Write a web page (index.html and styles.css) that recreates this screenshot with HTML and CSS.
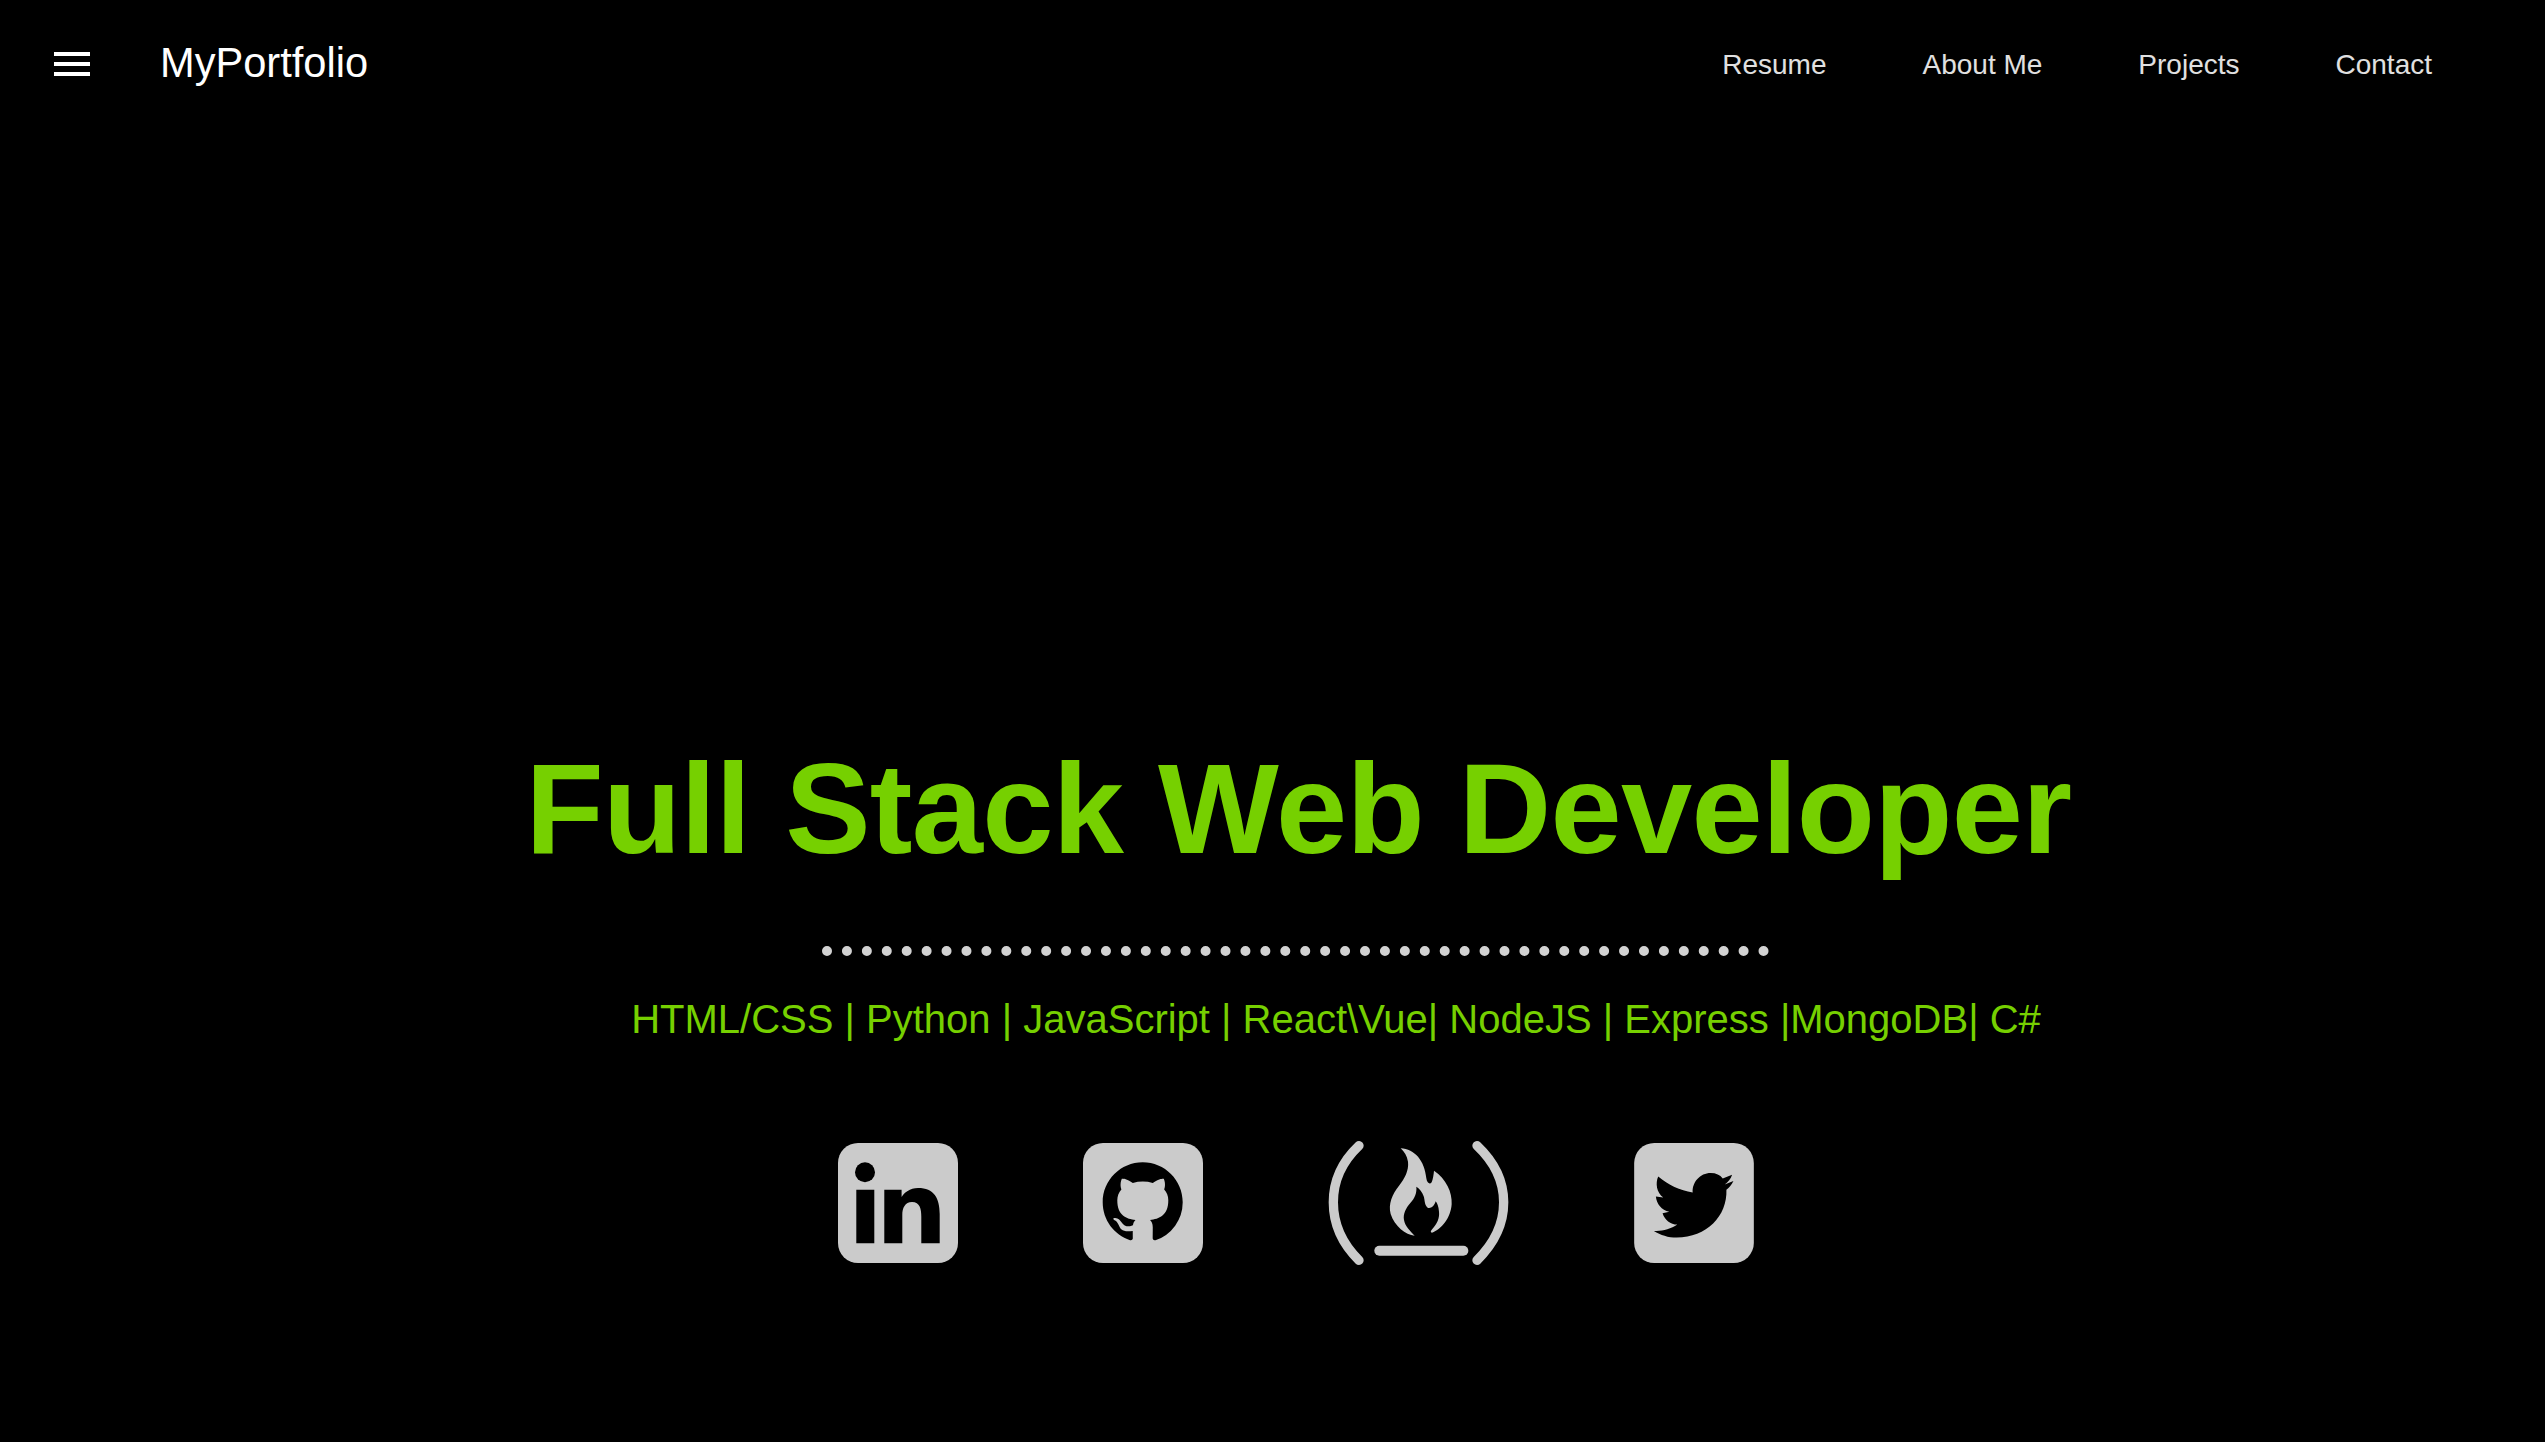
FILE: index.html
```html
<!DOCTYPE html>
<html lang="en">
<head>
<meta charset="utf-8">
<title>MyPortfolio</title>
<link rel="stylesheet" href="styles.css">
</head>
<body>
<header class="topbar">
  <div class="brand">
    <button class="menu" aria-label="Menu"><span></span><span></span><span></span></button>
    <a class="logo" href="#">MyPortfolio</a>
  </div>
  <nav class="nav">
    <a href="#">Resume</a>
    <a href="#">About Me</a>
    <a href="#">Projects</a>
    <a href="#">Contact</a>
  </nav>
</header>
<main class="hero">
  <h1 class="title">Full Stack Web Developer</h1>
  <hr class="dots">
  <p class="skills">HTML/CSS | Python | JavaScript | React\Vue| NodeJS | Express |MongoDB| C#</p>
  <div class="social">
    <a href="#" class="icon" aria-label="LinkedIn">
      <svg width="120" height="120" viewBox="0 0 120 120">
        <rect width="120" height="120" rx="20" fill="#cbcbcb"/>
        <circle cx="27" cy="29.3" r="10"/>
        <path d="M18.3 46.7H36.3V100.3H18.3Z"/>
        <path d="M46.3 46.7H63.6V54C66 49.8 72 45 80 45C96 45 101.7 55 101.7 71V100.3H83.3V74C83.3 66 82 59 74 59C67 59 64.3 65 64.3 72V100.3H46.3Z"/>
      </svg>
    </a>
    <a href="#" class="icon" aria-label="GitHub">
      <svg width="120" height="120" viewBox="0 0 120 120">
        <rect width="120" height="120" rx="20" fill="#cbcbcb"/>
        <path transform="translate(19.7 19.3) scale(5)" d="M8 0C3.58 0 0 3.58 0 8c0 3.54 2.29 6.53 5.47 7.59.4.07.55-.17.55-.38 0-.19-.01-.82-.01-1.49-2.01.37-2.53-.49-2.69-.94-.09-.23-.48-.94-.82-1.13-.28-.15-.68-.52-.01-.53.63-.01 1.08.58 1.23.82.72 1.21 1.87.87 2.33.66.07-.52.28-.87.51-1.07-1.78-.2-3.64-.89-3.64-3.95 0-.87.31-1.59.82-2.15-.08-.2-.36-1.02.08-2.12 0 0 .67-.21 2.2.82.64-.18 1.32-.27 2-.27.68 0 1.36.09 2 .27 1.53-1.04 2.2-.82 2.2-.82.44 1.1.16 1.92.08 2.12.51.56.82 1.27.82 2.15 0 3.07-1.87 3.75-3.65 3.95.29.25.54.73.54 1.48 0 1.07-.01 1.93-.01 2.2 0 .21.15.46.55.38A8.013 8.013 0 0016 8c0-4.42-3.58-8-8-8z"/>
      </svg>
    </a>
    <a href="#" class="icon" aria-label="freeCodeCamp">
      <svg width="181" height="124" viewBox="85 66 543 372">
        <g fill="none" stroke="#cbcbcb" stroke-linecap="round">
          <path stroke-width="28" d="M178 80C125 130 101 190 101 250C101 312 125 372 178 424"/>
          <path stroke-width="28" d="M532 80C585 130 612 190 612 250C612 312 585 372 532 424"/>
          <path stroke-width="30" d="M239 395H491"/>
        </g>
        <path fill="#cbcbcb" d="M303 88C345 90 375 125 380 178C382 192 390 198 396 190C400 180 402 166 403 155C440 180 458 220 456 255C454 295 425 332 397 341C392 341 392 336 398 330C412 314 420 298 418 278C417 262 412 252 408 247C404 262 392 270 384 266C374 258 376 244 372 232C368 218 358 208 350 203C352 222 345 238 332 252C318 268 310 285 313 303C316 322 332 336 345 350C318 348 285 322 273 285C265 255 278 225 298 200C315 178 328 155 325 128C322 110 314 98 303 88Z"/>
      </svg>
    </a>
    <a href="#" class="icon" aria-label="Twitter">
      <svg width="120" height="120" viewBox="1003 72 358 359">
        <rect x="1003" y="72" width="358" height="359" rx="60" fill="#cbcbcb"/>
        <path d="M1075 172C1105 197 1140 214 1178 220C1176 190 1200 162 1232 162C1248 162 1260 168 1268 178L1296 167C1292 180 1284 189 1274 196L1300 186C1294 198 1288 205 1279 212C1282 290 1220 355 1130 355C1105 355 1082 347 1062 335C1085 337 1112 330 1132 316C1112 316 1094 302 1088 282L1108 278C1085 272 1070 255 1068 232L1090 235C1070 220 1066 192 1075 172Z"/>
      </svg>
    </a>
  </div>
</main>
</body>
</html>
```
FILE: styles.css
```css
html, body {
  margin: 0;
  padding: 0;
  height: 100%;
  background: #000;
  overflow: hidden;
  font-family: "Liberation Sans", Arial, sans-serif;
}

.topbar {
  display: flex;
  align-items: center;
  justify-content: space-between;
  height: 128px;
  padding: 0 113px 0 54px;
}

.brand {
  display: flex;
  align-items: center;
  gap: 70px;
}

.menu {
  display: flex;
  flex-direction: column;
  gap: 6px;
  width: 36px;
  padding: 0;
  border: 0;
  background: none;
}

.menu span {
  display: block;
  width: 36px;
  height: 4px;
  background: #fff;
}

.logo {
  margin-bottom: 2px;
  color: #fff;
  font-size: 41.6px;
  line-height: 48px;
  text-decoration: none;
}

.nav {
  display: flex;
  gap: 96px;
  margin-top: 1px;
}

.nav a {
  color: #e0e0e0;
  font-size: 28px;
  line-height: 32px;
  text-decoration: none;
}

.hero {
  display: flex;
  flex-direction: column;
  align-items: center;
  padding-top: 606px;
}

.title {
  margin: 0;
  padding-left: 52px;
  color: #76d000;
  font-size: 128px;
  font-weight: 700;
  letter-spacing: -0.7px;
  line-height: 150px;
  white-space: nowrap;
}

.dots {
  width: 947px;
  height: 0;
  margin: 62px 0 0 46px;
  border: 0;
  border-top: 10px dotted #d2d2d2;
}

.skills {
  margin: 39px 0 0 127px;
  color: #76d000;
  font-size: 40px;
  line-height: 48px;
  white-space: nowrap;
}

.social {
  display: flex;
  align-items: center;
  gap: 125.2px;
  margin: 98px 0 0 47px;
}

.icon {
  display: block;
  line-height: 0;
}

.icon svg {
  display: block;
  fill: #000;
}
```
